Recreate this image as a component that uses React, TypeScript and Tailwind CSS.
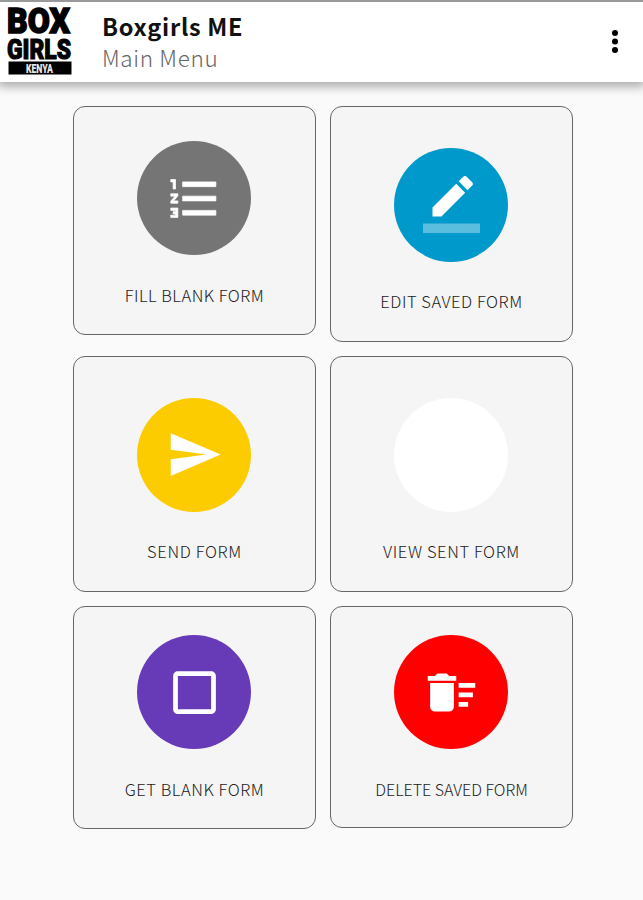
import React from "react";
import clsx from "clsx";

interface MenuItem {
  label: string;
  circle: string;
  card: string;
  text: string;
  icon?: React.ReactNode;
}

// 24x24 glyphs, shown at 57px inside the 114px circles
const leftColumn: MenuItem[] = [
  {
    label: "FILL BLANK FORM",
    circle: "bg-[#757575]",
    card: "h-[229px] pt-[34px]",
    text: "text-[16.5px] tracking-[0.48px]",
    icon: (
      <path
        d="M2 17h2v.5H3v1h1v.5H2v1h3v-4H2v1zm1-9h1V4H2v1h1v3zm-1 3h1.8L2 13.1v.9h3v-1H3.2L5 10.9V10H2v1zm5-6v2h14V5H7zm0 14h14v-2H7v2zm0-6h14v-2H7v2z"
        stroke="#fff"
        strokeWidth=".3"
      />
    ),
  },
  {
    label: "SEND FORM",
    circle: "bg-[#fdcc00]",
    card: "h-[236px] pt-[40.5px]",
    text: "text-[16.5px] tracking-[0.65px]",
    icon: <path d="M2.01 21L23 12 2.01 3 2 10l15 2-15 2z" />,
  },
  {
    label: "GET BLANK FORM",
    circle: "bg-[#673ab7]",
    card: "h-[223px] pt-[28px]",
    text: "text-[16.5px] tracking-[0.54px]",
    icon: (
      <path d="M19 5v14H5V5h14m0-2H5c-1.1 0-2 .9-2 2v14c0 1.1.9 2 2 2h14c1.1 0 2-.9 2-2V5c0-1.1-.9-2-2-2z" />
    ),
  },
];

const rightColumn: MenuItem[] = [
  {
    label: "EDIT SAVED FORM",
    circle: "bg-[#0099cc]",
    card: "h-[236px] pt-[40.5px]",
    text: "text-[16.5px] tracking-[0.54px]",
    icon: (
      <>
        <path d="M17.75 7L14 3.25l-10 10V17h3.75l10-10zm2.96-2.96c.39-.39.39-1.02 0-1.41L18.37.29c-.39-.39-1.02-.39-1.41 0L15 2.25 18.75 6l1.96-1.96z" />
        <path d="M0 20h24v4H0z" fillOpacity=".36" />
      </>
    ),
  },
  {
    label: "VIEW SENT FORM",
    circle: "bg-white",
    card: "h-[236px] pt-[40.5px]",
    text: "text-[16.5px] tracking-[0.6px]",
  },
  {
    label: "DELETE SAVED FORM",
    circle: "bg-[#ff0000]",
    card: "h-[222px] pt-[28px]",
    text: "text-[16px]",
    icon: (
      <path d="M15 16h4v2h-4zm0-8h7v2h-7zm0 4h6v2h-6zM3 18c0 1.1.9 2 2 2h6c1.1 0 2-.9 2-2V8H3v10zM14 5h-3l-1-1H6L5 5H2v2h12z" />
    ),
  },
];

function Logo() {
  return (
    <svg width="72" height="76" viewBox="0 0 72 76" className="shrink-0 overflow-visible font-['Roboto'] font-black">
      <g stroke="#000">
        <text x="7" y="33.3" fontSize="35" strokeWidth="1.5" textLength="63" lengthAdjust="spacingAndGlyphs">BOX</text>
        <text x="7" y="59.2" fontSize="28" strokeWidth="1.1" textLength="64" lengthAdjust="spacingAndGlyphs">GIRLS</text>
      </g>
      <rect x="8.5" y="61.5" width="63" height="13" />
      <text x="26" y="72.5" fontSize="13.5" fill="#e8e8e8" textLength="27" lengthAdjust="spacingAndGlyphs">KENYA</text>
    </svg>
  );
}

function MenuCard({ item }: { item: MenuItem }) {
  return (
    <button
      className={clsx(
        "flex w-[243px] flex-col items-center rounded-[12px] border border-[#666] bg-[#f5f5f5]",
        item.card
      )}
    >
      <span className={clsx("mr-px flex size-[114px] shrink-0 items-center justify-center rounded-full", item.circle)}>
        {item.icon && (
          <svg width="57" height="57" viewBox="0 0 24 24" fill="#fff">
            {item.icon}
          </svg>
        )}
      </span>
      <span className={clsx("mt-[27.5px] leading-6 font-light whitespace-nowrap text-[#222]", item.text)}>
        {item.label}
      </span>
    </button>
  );
}

export default function App() {
  return (
    <div className="h-[900px] w-[643px] overflow-hidden bg-[#fafafa] font-['Noto_Sans_CJK_SC','Noto_Sans',sans-serif]">
      <header className="flex h-[82px] border-t-2 border-[#999] bg-white shadow-[0_3px_9px_2px_rgba(0,0,0,0.3)]">
        <div className="-mt-0.5 flex">
          <Logo />
        </div>
        <div className="ml-[30px] flex-1 pt-2">
          <h1 className="text-[23.5px] leading-8 font-bold tracking-[0.7px] text-[#111]">Boxgirls ME</h1>
          <p className="-mt-px text-[22.5px] leading-8 font-light tracking-[0.65px] text-[#666]">Main Menu</p>
        </div>
        <svg width="10" height="28" viewBox="0 0 10 28" className="mt-[26px] mr-[23px]">
          <circle cx="5" cy="5" r="3" />
          <circle cx="5" cy="13.5" r="3" />
          <circle cx="5" cy="22" r="3" />
        </svg>
      </header>

      <main className="flex gap-[14px] pt-6 pl-[73px]">
        <div className="grid auto-rows-[250px] items-start">
          {leftColumn.map((item) => (
            <MenuCard key={item.label} item={item} />
          ))}
        </div>
        <div className="grid auto-rows-[250px] items-start">
          {rightColumn.map((item) => (
            <MenuCard key={item.label} item={item} />
          ))}
        </div>
      </main>
    </div>
  );
}
